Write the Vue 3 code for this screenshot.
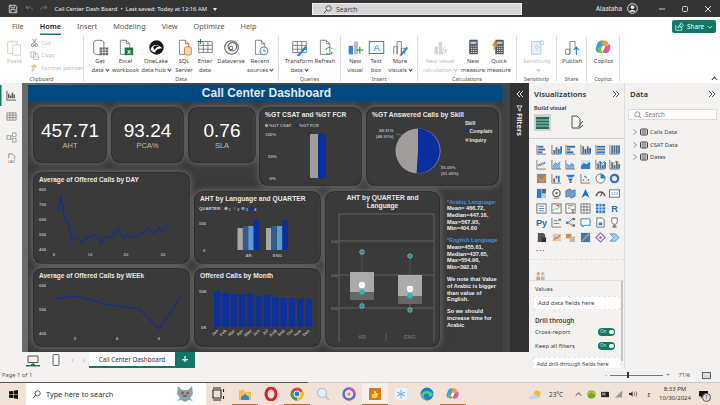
<template>
  <div class="app">
    <header class="titlebar">
      <svg class="tb-ico" viewBox="0 0 12 12"><path d="M1.5 1.5h7.5l1.5 1.5v7.5h-9z M3.5 1.5v3h4.500v-3 M3.5 10.5v-4h5v4" fill="none" stroke="#ddd" stroke-width="1"/></svg>
      <svg class="tb-ico" viewBox="0 0 12 12"><path d="M3 2v3h3 M3 5c2-3 6-2 7 2" fill="none" stroke="#777" stroke-width="1"/></svg>
      <svg class="tb-ico" viewBox="0 0 12 12"><path d="M9 2v3h-3 M9 5c-2-3-6-2-7 2" fill="none" stroke="#777" stroke-width="1"/></svg>
      <span class="doc-title">Call Center Dash Board &nbsp;•&nbsp; Last saved: Today at 12:16 AM</span>
      <span class="doc-caret"></span>
      <div class="top-search">
        <svg width="9" height="9" viewBox="0 0 12 12"><circle cx="7.5" cy="4.5" r="3.5" fill="none" stroke="#444"/><path d="M5 7l-4 4" stroke="#444" stroke-width="1.2"/></svg>
        <span>Search</span>
      </div>
      <span class="user">Alaataha</span>
      <svg class="avatar" viewBox="0 0 12 12"><circle cx="6" cy="6" r="5.3" fill="#333" stroke="#eee"/><circle cx="6" cy="4.5" r="2" fill="#eee"/><path d="M2.5 9.5c1-2.5 6-2.5 7 0z" fill="#eee"/></svg>
      <div class="win-btn"><svg width="8" height="8" viewBox="0 0 8 8"><path d="M1 4h6" stroke="#ccc"/></svg></div>
      <div class="win-btn"><svg width="8" height="8" viewBox="0 0 8 8"><rect x="1.5" y="1.5" width="5" height="5" rx="1" fill="none" stroke="#ccc"/></svg></div>
      <div class="win-btn"><svg width="8" height="8" viewBox="0 0 8 8"><path d="M1 1l6 6M7 1l-6 6" stroke="#ddd"/></svg></div>
    </header>

    <nav class="tabs">
      <span v-for="tab in tabs" :key="tab" :class="['tab', { active: tab === 'Home' }]">{{ tab }}</span>
      <button class="share">
        <svg width="9" height="9" viewBox="0 0 12 12"><path d="M1 4v7h8V8 M4 8c0-3 2-4.500 4-4.500V1l3.500 3.500L8 8V5.500C6.500 5.500 5 6.500 4 8z" fill="none" stroke="#fff" stroke-width=".9"/></svg>
        Share
        <svg width="6" height="6" viewBox="0 0 8 8"><path d="M1 2.5l3 3 3-3" fill="none" stroke="#fff"/></svg>
      </button>
    </nav>

    <section class="ribbon">
      <div class="group clipboard">
        <div class="group-body">
          <div class="rb disabled paste">
            <svg class="rb-ico" viewBox="0 0 20 20"><rect x="2" y="3" width="11" height="14" rx="1" fill="none" stroke="#edcfa9" stroke-width="1.3"/><rect x="5" y="1.5" width="5" height="3" fill="#e8e3dd"/><rect x="8" y="7" width="9" height="12" fill="#fff" stroke="#ccc"/></svg>
            <span class="rb-line">Paste</span>
          </div>
          <div class="clip-list">
            <div class="clip"><svg viewBox="0 0 10 10"><path d="M3 1l3 5M7 1L4 6" stroke="#888" fill="none"/><circle cx="3" cy="8" r="1.5" fill="none" stroke="#888"/><circle cx="7" cy="8" r="1.5" fill="none" stroke="#888"/></svg>Cut</div>
            <div class="clip"><svg viewBox="0 0 10 10"><path d="M1 1h5v6H1z M4 3h5v6.5H4z" fill="#fff" stroke="#aaa" stroke-width=".8"/></svg>Copy</div>
            <div class="clip"><svg viewBox="0 0 10 10"><path d="M1 4l4-3 3 3-4 3z" fill="#e9c88e"/><path d="M4 7l-2 2" stroke="#aaa" stroke-width="1.5"/></svg>Format painter</div>
          </div>
        </div>
        <div class="group-name">Clipboard</div>
      </div>

      <div v-for="group in ribbonGroups" :key="group.name" class="group" :style="{ width: group.width + 'px' }">
        <div class="group-body">
          <div v-for="btn in group.buttons" :key="btn.lines.join()" :class="['rb', { disabled: btn.disabled }]" :style="{ width: btn.width + 'px' }">
            <svg class="rb-ico" viewBox="0 0 20 20" v-html="ribbonIcons[btn.icon]"></svg>
            <span v-for="(line, i) in btn.lines" :key="i" class="rb-line">{{ line }}<i v-if="btn.caret && i === btn.lines.length - 1" class="caret"></i></span>
            <span v-if="btn.caretOnly" class="rb-line"><i class="caret"></i></span>
          </div>
        </div>
        <div class="group-name">{{ group.name }}</div>
      </div>
      <svg class="ribbon-collapse" width="7" height="7" viewBox="0 0 8 8"><path d="M1 5.5l3-3 3 3" fill="none" stroke="#444" stroke-width="1.2"/></svg>
    </section>

    <main class="main">
      <div class="left-col">
        <div class="work-row">
          <aside class="rail">
            <div class="rail-item selected"><svg viewBox="0 0 12 12"><path d="M1 1v10h10" fill="none" stroke="#555"/><path d="M3 9V4M5 9V6M7 9V3M9 9V5" stroke="#555" stroke-width="1.5"/></svg></div>
            <div class="rail-item"><svg viewBox="0 0 12 12"><path d="M1 2h10v8H1z M1 4.500h10 M1 7.200h10 M4.300 2v8 M7.600 2v8" fill="none" stroke="#777" stroke-width=".8"/></svg></div>
            <div class="rail-item"><svg viewBox="0 0 12 12"><path d="M7 1h4v4H7z M1 4h4v4H1z M7 7h4v4H7z M5 5l2-1 M5 7l2 1" fill="none" stroke="#888" stroke-width=".8"/></svg></div>
            <div class="rail-item"><svg viewBox="0 0 12 12"><path d="M3 1h4l2.500 2.500V7 M3 1v5" fill="none" stroke="#777" stroke-width=".8"/><text x="6" y="10.500" font-size="3.500" text-anchor="middle" fill="#666" font-family="Liberation Sans">DAX</text></svg></div>
          </aside>

          <div class="canvas-wrap">
            <div class="report">
              <h1 class="report-title">Call Center Dashboard</h1>
              <div class="report-grid">
                <div v-for="kpi in kpis" :key="kpi.label" :class="['card', 'kpi', kpi.cls]">
                  <div class="kpi-value">{{ kpi.value }}</div>
                  <div class="kpi-label">{{ kpi.label }}</div>
                </div>

                <div class="card c-csat">
                  <div class="card-title">%GT CSAT and %GT FCR</div>
                  <svg viewBox="260 121 101 64" class="chart">
                    <circle cx="266.5" cy="125.5" r="1.7" fill="#a09c9c"/><text class="ax" x="269" y="127">%GT CSAT</text>
                    <circle cx="296.5" cy="125.5" r="1.7" fill="#0b2f9f"/><text class="ax" x="299" y="127">%GT FCR</text>
                    <text class="ax" x="265" y="136">100%</text><text class="ax" x="268" y="158">50%</text><text class="ax" x="269.5" y="180">0%</text>
                    <rect x="310" y="134" width="8" height="44" fill="#a09c9c"/><rect x="318" y="134" width="8" height="44" fill="#0b2f9f"/>
                  </svg>
                </div>

                <div class="card c-pie">
                  <div class="card-title">%GT Answered Calls by Skill</div>
                  <svg viewBox="367 121 131 64" class="chart">
                    <circle cx="418" cy="151" r="22.5" fill="#a09c9c"/>
                    <path d="M418 151L418 128.5A22.5 22.5 0 1 1 416.6 173.5Z" fill="#0b2f9f"/>
                    <path d="M396 134l6 1 M439 165l6 3" stroke="#999" stroke-width=".5" fill="none"/>
                    <text class="ax" x="379" y="132">48.91%</text><text class="ax" x="376" y="137.5">(48.91%)</text>
                    <text class="ax" x="441" y="169">51.09%</text><text class="ax" x="441" y="174.5">(51.09%)</text>
                    <text class="lg-b" x="465" y="125">Skill</text>
                    <circle cx="467" cy="130.5" r="1.8" fill="#0b2f9f"/><text class="lg-b" x="469.5" y="132.5">Complain</text>
                    <circle cx="467" cy="140" r="1.8" fill="#a09c9c"/><text class="lg-b" x="469.5" y="142">Inquiry</text>
                  </svg>
                </div>

                <div class="card c-day">
                  <div class="card-title narrow">Average of Offered Calls by DAY</div>
                  <svg viewBox="34 186 155 77" class="chart">
                    <text v-for="t in dayY" :key="t.v" class="ax" x="39" :y="t.y">{{ t.v }}</text>
                    <text v-for="t in dayX" :key="t.v" class="ax" :x="t.x" y="256" text-anchor="middle">{{ t.v }}</text>
                    <polyline :points="dayLine" class="line"/>
                  </svg>
                </div>

                <div class="card c-week">
                  <div class="card-title narrow">Average of Offered Calls by WEEk</div>
                  <svg viewBox="34 282 155 64" class="chart">
                    <text class="ax" x="39" y="287">600</text><text class="ax" x="39" y="311">500</text><text class="ax" x="39" y="335">400</text>
                    <text class="ax" x="75" y="340" text-anchor="middle">2</text><text class="ax" x="117" y="340" text-anchor="middle">4</text><text class="ax" x="159" y="340" text-anchor="middle">6</text>
                    <polyline points="54,298.5 76,296 105,304 118,306 139,308.5 159,329 181,297" class="line"/>
                  </svg>
                </div>

                <div class="card c-lang">
                  <div class="card-title">AHT by Language and QUARTER</div>
                  <svg viewBox="195 205 125 58" class="chart">
                    <text class="lg-b small" x="199" y="210">QUARTER</text>
                    <g v-for="(q, i) in quarters" :key="i">
                      <circle :cx="226 + i * 8.5" cy="208.5" r="1.7" :fill="q"/>
                      <text class="ax" :x="228.5 + i * 8.5" y="210.5">{{ i + 1 }}</text>
                    </g>
                    <text class="ax" x="199" y="225">500</text><text class="ax" x="203" y="252">0</text>
                    <rect v-for="b in langBars" :key="b.x" :x="b.x" :y="b.y" width="5.3" :height="250 - b.y" :fill="b.c"/>
                    <text class="ax" x="248.5" y="257" text-anchor="middle">AR</text><text class="ax" x="277.5" y="257" text-anchor="middle">ENG</text>
                  </svg>
                </div>

                <div class="card c-month">
                  <div class="card-title">Offered Calls by Month</div>
                  <svg viewBox="195 282 125 64" class="chart">
                    <text class="ax" x="199" y="293">50K</text><text class="ax" x="201" y="329">0K</text>
                    <rect v-for="b in monthBars" :key="b.x" :x="b.x" :y="b.y" width="6.6" :height="327 - b.y" fill="#0b2f9f"/>
                    <text v-for="b in monthBars" :key="b.m" class="ax" text-anchor="end" :transform="`translate(${b.x + 4.5} 331) rotate(-45)`">{{ b.m }}</text>
                  </svg>
                </div>

                <div class="card c-box">
                  <div class="card-title box-title">AHT by QUARTER and<br>Language</div>
                  <svg viewBox="326 213 113 133" class="chart">
                    <path d="M339 342V214H434V342 M339 241H434 M339 275H434 M339 308H434 M386 333V341" fill="none" stroke="#666" stroke-width=".9"/>
                    <text class="ax dim" x="331" y="242.5">600</text><text class="ax dim" x="331" y="276.5">500</text><text class="ax dim" x="331" y="309.5">400</text>
                    <g v-for="box in boxes" :key="box.x">
                      <path :d="`M${box.x} ${box.top}V${box.bottom}`" stroke="#666" stroke-width=".6"/>
                      <rect :x="box.x - 12" :y="box.q3" width="24" :height="box.q1 - box.q3" fill="#ababab"/>
                      <rect :x="box.x - 12" :y="box.q1" width="24" height="8" fill="#666"/>
                      <circle :cx="box.x" :cy="box.top" r="2.3" fill="#1f8f93" stroke="#cdd" stroke-width=".5"/>
                      <circle :cx="box.x" :cy="box.bottom" r="2.3" fill="#1f8f93" stroke="#cdd" stroke-width=".5"/>
                      <circle :cx="box.x" :cy="box.q1" r="2.8" fill="#2db2b8"/>
                      <circle :cx="box.x" :cy="box.q1 - 7" r="3.2" fill="#fff"/>
                      <text class="ax dim big" :x="box.x" y="339" text-anchor="middle">{{ box.label }}</text>
                    </g>
                  </svg>
                </div>

                <div class="notes">
                  <p><b class="note-head">*Arabic Language:</b><br>Mean= 466.72,<br>Median=447.16,<br>Max=567.95,<br>Min=404.60</p>
                  <p><b class="note-head">*English Language</b><br>Mean=455.61,<br>Median=437.65,<br>Max=554.96,<br>Min=392.16</p>
                  <p>We note that Value<br>of Arabic is bigger<br>than value of<br>English.</p>
                  <p>So we should<br>increase time for<br>Arabic</p>
                </div>
              </div>
            </div>
          </div>

          <aside class="filters">
            <svg width="8" height="8" viewBox="0 0 8 8"><path d="M4 1L1 4l3 3M7 1L4 4l3 3" fill="none" stroke="#eee"/></svg>
            <svg class="filter-ico" width="7" height="7" viewBox="0 0 8 8"><path d="M1 1h6L4.8 4v3L3.2 6V4z" fill="none" stroke="#eee"/></svg>
            <span class="filters-label">Filters</span>
          </aside>
        </div>

        <div class="pagebar">
          <div class="device active-device">
            <svg width="12" height="10" viewBox="0 0 12 10"><path d="M1 1h10v6.5H1z M4 9.5h4 M6 7.5v2" fill="none" stroke="#555"/></svg>
          </div>
          <div class="device">
            <svg width="8" height="12" viewBox="0 0 8 12"><rect x="1" y=".5" width="6" height="11" rx="1" fill="none" stroke="#666"/></svg>
          </div>
          <span class="pg-arrow">‹</span><span class="pg-arrow">›</span>
          <div class="page-tab">Call Center Dashboard</div>
          <div class="page-add">+</div>
        </div>
      </div>

      <aside class="viz">
        <div class="pane-head"><strong>Visualizations</strong>
          <svg width="8" height="8" viewBox="0 0 8 8"><path d="M1 1l3 3-3 3M4 1l3 3-3 3" fill="none" stroke="#555"/></svg>
        </div>
        <div class="build">Build visual</div>
        <div class="build-tabs">
          <div class="build-sel">
            <svg width="13" height="12" viewBox="0 0 13 12"><rect width="13" height="12" fill="#1f6f5e"/><path d="M0 3h13M0 6h13M0 9h13" stroke="#ddd" stroke-width=".8"/></svg>
          </div>
          <svg class="build-fmt" width="14" height="15" viewBox="0 0 14 15"><path d="M2 1h5l3 3v9H2z M8 12l5-6M10 13l3-3" fill="none" stroke="#555"/></svg>
        </div>
        <div class="viz-grid">
          <svg v-for="(icon, i) in vizIcons" :key="i" width="11" height="11" viewBox="0 0 12 12" v-html="icon"></svg>
        </div>
        <div class="dots">···</div>
        <div class="extra">
          <svg width="11" height="11" viewBox="0 0 12 12"><circle cx="3.5" cy="3" r="1.8" fill="#e8a06a"/><circle cx="8.5" cy="3" r="1.8" fill="#bbb"/><rect x="1.5" y="6" width="4" height="4" fill="#e8a06a"/><rect x="6.5" y="6" width="4" height="4" fill="#bbb"/></svg>
        </div>
        <div class="wells">
          <div class="well-label">Values</div>
          <div class="well">Add data fields here</div>
          <div class="well-head">Drill through</div>
          <div class="toggle-row">Cross-report<span class="toggle">On<i></i></span></div>
          <div class="toggle-row">Keep all filters<span class="toggle">On<i></i></span></div>
          <div class="well last">Add drill-through fields here</div>
          <div class="scroll"></div>
        </div>
      </aside>

      <aside class="data">
        <div class="pane-head"><strong>Data</strong>
          <svg width="8" height="8" viewBox="0 0 8 8"><path d="M1 1l3 3-3 3M4 1l3 3-3 3" fill="none" stroke="#555"/></svg>
        </div>
        <div class="data-search">
          <svg width="8" height="8" viewBox="0 0 12 12"><circle cx="5" cy="5" r="3.8" fill="none" stroke="#666"/><path d="M8 8l3 3" stroke="#666"/></svg>
          Search
        </div>
        <div v-for="table in tables" :key="table" class="data-row">
          <svg width="6" height="6" viewBox="0 0 6 6"><path d="M1.5 .5l3 2.500-3 2.500" fill="none" stroke="#777" stroke-width=".8"/></svg>
          <svg width="8" height="8" viewBox="0 0 8 8"><rect x=".5" y="1" width="7" height="6" rx="1" fill="#fff" stroke="#444"/><path d="M.5 3h7M.5 5h7M3 1v6M5 1v6" stroke="#444" stroke-width=".6"/></svg>
          {{ table }}
        </div>
      </aside>
    </main>

    <div class="status">
      <span>Page 1 of 1</span>
      <div class="zoom">
        <span>-</span>
        <div class="slider"><i></i></div>
        <span>+</span>
        <span class="zoom-pct">71%</span>
        <svg width="9" height="7" viewBox="0 0 9 7"><rect x=".5" y=".5" width="8" height="6" fill="#ddd" stroke="#666"/></svg>
      </div>
    </div>

    <footer class="taskbar">
      <div class="start"><svg width="9" height="9" viewBox="0 0 10 10"><path d="M0 1.5L4.500 1v3.800H0z M5.200 .9L10 0v4.800H5.200z M0 5.400h4.500V9L0 8.500z M5.200 5.400H10V10L5.200 9.200z" fill="#111"/></svg></div>
      <div class="task-search">
        <svg width="9" height="9" viewBox="0 0 12 12"><circle cx="7.5" cy="4.5" r="3.5" fill="none" stroke="#333"/><path d="M5 7l-4 4" stroke="#333" stroke-width="1.2"/></svg>
        <span>Type here to search</span>
        <svg class="mascot" width="20" height="18" viewBox="0 0 20 18"><path d="M3 1l4 4h6l4-4 1 8-3 4 3 3-4-1-4 2-4-2-4 1 3-3-3-4z" fill="#84a6a6"/><circle cx="7.5" cy="8" r="1.5" fill="#c44"/><circle cx="12.5" cy="8" r="1.5" fill="#c44"/><path d="M8 11h4" stroke="#234" stroke-width=".8"/></svg>
      </div>
      <div v-for="app in taskApps" :key="app.name" :class="['task-app', { running: app.running, focused: app.focused }]">
        <svg width="14" height="14" viewBox="0 0 14 14" v-html="app.svg"></svg>
      </div>
      <div class="tray">
        <svg width="14" height="13" viewBox="0 0 14 13"><circle cx="9" cy="6" r="3.5" fill="#f4b93c"/><path d="M1 11c0-2.500 2-3 3-3 .5-2 4-2.500 5 0 2.500 0 3 3 1 3z" fill="#bcd6ea"/></svg>
        <span class="t-temp">23°C</span>
        <svg class="t-item" width="7" height="6" viewBox="0 0 8 6"><path d="M1 5l3-3.500L7 5" fill="none" stroke="#333"/></svg>
        <svg class="t-item" width="9" height="9" viewBox="0 0 10 10"><circle cx="5" cy="5" r="4.5" fill="#6aa82e"/><path d="M2 5a3 3 0 0 1 6 0" fill="none" stroke="#f0c020" stroke-width="1.5"/></svg>
        <svg class="t-item" width="9" height="7" viewBox="0 0 10 8"><rect y="1" width="9" height="6" fill="#222"/><rect x="1" y="2" width="4" height="3" fill="#888"/></svg>
        <svg class="t-item" width="9" height="8" viewBox="0 0 10 8"><path d="M0 8L8 0v8z" fill="#999"/></svg>
        <svg class="t-item" width="9" height="8" viewBox="0 0 10 8"><path d="M0 3h2l2-2v6L2 5H0z" fill="#333"/><path d="M5.500 2c1 1 1 3 0 4M7.500 1c1.500 1.500 1.500 4.500 0 6" fill="none" stroke="#333" stroke-width=".7"/></svg>
        <span class="t-lang">ε</span>
        <div class="clock"><span>8:33 PM</span><span>10/30/2024</span></div>
        <div class="notify">
          <svg width="9" height="8" viewBox="0 0 10 9"><path d="M0 0h10v6H4L2 8.500V6H0z" fill="#111"/></svg>
          <span>1</span>
        </div>
      </div>
    </footer>
  </div>
</template>

<script setup>
const tabs = ['File', 'Home', 'Insert', 'Modeling', 'View', 'Optimize', 'Help']
const tables = ['Calls Data', 'CSAT Data', 'Dates']

const kpis = [
  { value: '457.71', label: 'AHT', cls: 'k1' },
  { value: '93.24', label: 'PCA%', cls: 'k2' },
  { value: '0.76', label: 'SLA', cls: 'k3' }
]

const ribbonGroups = [
  {
    name: 'Data', width: 195,
    buttons: [
      { icon: 'get', lines: ['Get', 'data'], width: 24, caret: true },
      { icon: 'excel', lines: ['Excel', 'workbook'], width: 27 },
      { icon: 'onelake', lines: ['OneLake', 'data hub'], width: 34, caret: true },
      { icon: 'sql', lines: ['SQL', 'Server'], width: 22 },
      { icon: 'enter', lines: ['Enter', 'data'], width: 20 },
      { icon: 'dataverse', lines: ['Dataverse'], width: 32 },
      { icon: 'recent', lines: ['Recent', 'sources'], width: 26, caret: true }
    ]
  },
  {
    name: 'Queries', width: 62,
    buttons: [
      { icon: 'transform', lines: ['Transform', 'data'], width: 32, caret: true },
      { icon: 'refresh', lines: ['Refresh'], width: 20 }
    ]
  },
  {
    name: 'Insert', width: 77,
    buttons: [
      { icon: 'newvisual', lines: ['New', 'visual'], width: 20 },
      { icon: 'textbox', lines: ['Text', 'box'], width: 22 },
      { icon: 'more', lines: ['More', 'visuals'], width: 26, caret: true }
    ]
  },
  {
    name: 'Calculations', width: 99,
    buttons: [
      { icon: 'vcalc', lines: ['New visual', 'calculation'], width: 36, caret: true, disabled: true },
      { icon: 'measure', lines: ['New', 'measure'], width: 30 },
      { icon: 'quick', lines: ['Quick', 'measure'], width: 22 }
    ]
  },
  {
    name: 'Sensitivity', width: 40,
    buttons: [{ icon: 'sens', lines: ['Sensitivity'], width: 32, disabled: true, caretOnly: true }]
  },
  {
    name: 'Share', width: 30,
    buttons: [{ icon: 'publish', lines: ['Publish'], width: 22 }]
  },
  {
    name: 'Copilot', width: 33,
    buttons: [{ icon: 'copilot', lines: ['Copilot'], width: 25 }]
  }
]

const copilotMark = '<path d="M3 5c1-3 4-4 7-3l3 1-4 7-4 6c-3 0-5-3-4-6z" fill="#3aa0e8"/><path d="M3 11l5-3 1 8c-3 2-6 0-6-5z" fill="#7bc043"/><path d="M9 2c3-1 6 0 7 3l-3 4-5-2z" fill="#f0a030"/><path d="M17 6c2 3 1 8-2 10-2 1-5 1-6-1l3-6z" fill="#e05aa0"/><path d="M9 8l3 1-3 6-2-3z" fill="#fff"/>'
const calc = '<rect x="5" y="1" width="10" height="17" rx="1" fill="#555"/><rect x="6.5" y="3" width="7" height="3" fill="#9ec6e8"/><path d="M7 8.5h1.500M9.500 8.5H11M12 8.5h1.500M7 11h1.500M9.500 11H11M12 11h1.500M7 13.5h1.500M9.500 13.5H11M12 13.5h1.500M7 16h1.500M9.500 16H11M12 16h1.500" stroke="#fff"/>'
const doc = '<path d="M4 1.5h7l4 4V18H4z M11 1.5v4h4" fill="#fff" stroke="#666" stroke-width=".9"/>'
const table = '<path d="M2 3h16v13H2z M2 7.5h16 M2 12h16 M7.500 3v13 M12.800 3v13" fill="#fff" stroke="#666" stroke-width=".9"/>'

const ribbonIcons = {
  get: '<ellipse cx="8" cy="4" rx="6" ry="2.5" fill="#fff" stroke="#666"/><path d="M2 4v12c0 1.500 3 2.500 6 2.500s6-1 6-2.500V4" fill="#fff" stroke="#666"/><rect x="9" y="10" width="10" height="9" fill="#666"/><path d="M9 13h10M9 16h10M12.300 10v9M15.600 10v9" stroke="#fff" stroke-width=".7"/>',
  excel: doc + '<rect x="9" y="10" width="10" height="9" fill="#107c41"/><text x="14" y="17.5" font-size="7" fill="#fff" text-anchor="middle" font-weight="700" font-family="Liberation Sans">X</text>',
  onelake: '<circle cx="10" cy="10" r="8.5" fill="#1a1a1a"/><path d="M3 12c3-7 9-6 14-1-4 0-7 1-9 5-2 0-4-2-5-4z" fill="#fff"/><path d="M6 10c2-3 5-3 7-1-2 0-4 1-5 4z" fill="#1a1a1a"/>',
  sql: doc + '<ellipse cx="14" cy="10.5" rx="4" ry="1.5" fill="#f6d9b8" stroke="#d67a1f"/><path d="M10 10.5v7c0 1 2 1.500 4 1.500s4-.5 4-1.500v-7" fill="#f6d9b8" stroke="#d67a1f"/>',
  enter: table + '<path d="M4 0v6M1 3h6" stroke="#107c41" stroke-width="1.2"/>',
  dataverse: '<circle cx="10" cy="10" r="8" fill="none" stroke="#666" stroke-width="1.3"/><circle cx="11" cy="9" r="5" fill="none" stroke="#666" stroke-width="1.3"/><circle cx="9.5" cy="10.5" r="2" fill="none" stroke="#666" stroke-width="1.2"/>',
  recent: doc + '<circle cx="14" cy="14" r="4.7" fill="#fff" stroke="#2b7cd3" stroke-width="1.1"/><path d="M14 11.5V14h2.200" fill="none" stroke="#2b7cd3"/>',
  transform: table + '<path d="M8 18l9-10 2 2-9 10-3 0z" fill="#2b88d8"/>',
  refresh: doc + '<path d="M10.500 13a4 4 0 0 1 7-1.500 M18 15a4 4 0 0 1-7 1.500" fill="none" stroke="#4aa564" stroke-width="1.3"/>',
  newvisual: '<rect x="2" y="8" width="5" height="10" fill="#2b88d8"/><rect x="8" y="3" width="5" height="15" fill="#bbb"/><path d="M15 9v8M11 13h8" stroke="#2f9e58" stroke-width="1.5"/>',
  textbox: '<rect x="1.5" y="3" width="17" height="14" fill="#fff" stroke="#2b7cd3" stroke-width="1.2"/><text x="10" y="14.5" font-size="11" text-anchor="middle" fill="#2b7cd3" font-family="Liberation Sans">A</text>',
  more: '<path d="M2 18V9h4v9 M6 18V3h5v15 M11 18v-7h4v7" fill="#fff" stroke="#666" stroke-width=".9"/><path d="M9 19l8-10 2 2-8 9z" fill="#2b88d8"/>',
  vcalc: '<rect x="3" y="9" width="4" height="9" fill="#d8d8d8"/><rect x="8" y="3" width="4" height="15" fill="#d8d8d8"/><text x="15" y="16" font-size="9" font-style="italic" text-anchor="middle" fill="#bbb" font-family="Liberation Serif">fx</text>',
  measure: calc,
  quick: calc + '<path d="M6 0L1 8h3l-2 7 6-9H5z" fill="#e8862a"/>',
  sens: '<path d="M3 3h11v15H3z" fill="#e4f0fa" stroke="#a9cdec"/><path d="M6 8l5 5M8 6l5 5" stroke="#a9cdec"/><circle cx="15" cy="4.5" r="2.5" fill="none" stroke="#a9cdec"/>',
  publish: '<path d="M2 18v-6h5v6z M7 18V3h6v8" fill="#fff" stroke="#666" stroke-width=".9"/><path d="M14.500 19v-9M11.500 13l3-3.500 3 3.500" fill="none" stroke="#2b7cd3" stroke-width="1.3"/>',
  copilot: copilotMark
}

const dayLine = '58,212 61,196 65,220 67,222 69,225 72,242 75,238 78,238 83,243 87,237 90,238 94,235 98,238 101,243 105,237 112,237 116,230 119,230 123,238 127,235 134,238 142,233 148,228 152,233 156,232 159,228 163,232 167,224'
const dayY = [{ v: 800, y: 191 }, { v: 700, y: 206 }, { v: 600, y: 221 }, { v: 500, y: 236 }, { v: 400, y: 251 }]
const dayX = [{ v: 0, x: 54 }, { v: 10, x: 90 }, { v: 20, x: 126 }, { v: 30, x: 163 }]

const quarters = ['#a8a8a8', '#2f5f8f', '#5b9bd5', '#0b2f9f']
const langBars = [
  [237.5, 228, 0], [243, 226, 1], [248.3, 226, 2], [253.7, 220, 3],
  [266, 228, 0], [271.5, 226, 1], [277, 226, 2], [282.5, 220, 3]
].map(([x, y, q]) => ({ x, y, c: quarters[q] }))

const months = ['Jan', 'Feb', 'Mar', 'Apr', 'May', 'Jun', 'Jul', 'Aug', 'Sep', 'Oct', 'Nov', 'Dec']
const monthTops = [291, 293, 294, 294, 294, 296, 295, 297, 298, 298, 299, 299]
const monthBars = months.map((m, i) => ({ m, x: 214 + i * 8.3, y: monthTops[i] }))

const boxes = [
  { x: 362, label: 'AR', top: 252, bottom: 306, q3: 272, q1: 292 },
  { x: 410, label: 'ENG', top: 256, bottom: 310, q3: 275, q1: 296 }
]

// Visualization pane icons, small enough that only the rough shape has to read
const G = '#6b6a68'
const B = '#2b7cd3'
const O = '#dd8a3c'
const rect = (x, y, w, h, c = G) => `<rect x="${x}" y="${y}" width="${w}" height="${h}" fill="${c}"/>`
const line = (d, c = G, w = 0.9) => `<path d="${d}" fill="none" stroke="${c}" stroke-width="${w}"/>`
const axis = line('M1 1V11H11')
const hb = (a, c = B) => axis + a.map((w, i) => rect(2, 2 + i * 3, w, 2, i % 2 ? G : c)).join('')
const vb = (a, c = B) => axis + a.map((h, i) => rect(2.5 + i * 2.5, 10.5 - h, 2, h, i % 2 ? c : G)).join('')
const area = (d, c = B) => axis + `<path d="${d}V11H2z" fill="${c}" opacity=".55"/>` + line(d, c)
const vizIcons = [
  hb([6, 8, 5]), vb([4, 7, 5, 8]), hb([9, 4, 7], '#1d6fb8'), vb([8, 5, 8, 6], '#1d6fb8'), hb([9, 9, 9]), vb([9, 9, 9, 9]),
  axis + line('M2 8l3-3 2 2 3-4', B) + line('M2 6l3 1 2-3 3 1'),
  area('M2 8l3-4 2 2 3-3'), area('M2 5l3 3 2-3 3 2'), rect(1, 1, 10, 10, '#cfe2f3') + `<path d="M1 8l3-4 3 2 4-3v8H1z" fill="${B}"/>`, vb([5, 8, 4, 7]) + line('M2 6l3-3 3 2 3-3', B), vb([7, 4, 8, 5]) + line('M2 3l3 2 3-3 3 2', O),
  rect(1, 1, 10, 10, '#8a8a8a') + `<path d="M1 3l5 5 5-6v5l-5 4-5-5z" fill="${O}"/>`, axis + rect(2.5, 6, 2, 4) + rect(5, 3, 2, 3) + rect(7.5, 3, 2, 7, B),
  `<path d="M1 2h10L8.5 5h-5z" fill="${B}"/><path d="M3.5 6h5l-1 2.500h-3zM4.800 9h2.400v2H4.800z" fill="${G}"/>`, axis + rect(3, 7, 1.5, 1.5, B) + rect(6, 4, 1.5, 1.5, B) + rect(8.5, 7, 1.5, 1.5) + rect(4.5, 3, 1.5, 1.5),
  `<circle cx="6" cy="6" r="5" fill="#fff" stroke="${G}"/><path d="M6 6V1a5 5 0 0 1 5 5z" fill="${B}"/>`, `<circle cx="6" cy="6" r="4" fill="none" stroke="${B}" stroke-width="2.5"/><path d="M6 2a4 4 0 0 1 4 4" fill="none" stroke="${G}" stroke-width="2.5"/>`,
  rect(1, 1, 5, 10, B) + rect(6.5, 1, 4.5, 5, G) + rect(6.5, 6.5, 4.5, 4.5, '#a9cdec'), `<circle cx="6" cy="5.5" r="4" fill="#fff" stroke="${G}" stroke-width="1.4"/><circle cx="6" cy="5.5" r="1.5" fill="#4a9a50"/>` + line('M3 11h6'), `<path d="M1 3l4-2 3 2 3-1v7l-4 2-3-2-3 1z" fill="${B}" opacity=".7"/>` + line('M1 3l4-2 3 2 3-1v7l-4 2-3-2-3 1z'), `<path d="M6 1l4.500 10-4.500-3-4.500 3z" fill="#1d6fb8"/>`,
  line('M1.500 9a4.500 4.500 0 0 1 9 0', G, 2) + line('M6 9l2-4', '#222', 1), `<rect x=".5" y="2" width="11" height="8" fill="#fff" stroke="${G}"/><text x="6" y="8" font-size="4.5" text-anchor="middle" fill="${B}" font-family="Liberation Sans">123</text>`,
  `<rect x="1" y="1" width="10" height="10" fill="#fff" stroke="${G}"/>` + line('M3 3.500h6M3 6h6M3 8.500h6', B), `<rect x="1" y="1" width="10" height="10" fill="#fff" stroke="${G}"/>` + line('M2 8l3-2 2 1 3-4', '#4a9a50') + rect(6, 2, 3, 1.5, '#d44'), `<rect x="1" y="1" width="10" height="10" fill="#fff" stroke="${G}"/>` + line('M3 3h6M3 5.500h3') + line('M7 7h3l-1.200 1.500V11L8 10V8.500z', G), `<rect x="1" y="1" width="10" height="10" fill="#fff"/>` + line('M1 1h10v10H1z M1 4.300h10 M1 7.600h10 M4.300 1v10 M7.600 1v10'),
  rect(1, 1, 10, 10, B) + line('M1 4.300h10 M1 7.600h10 M4.300 1v10 M7.600 1v10', '#fff'), `<text x="6" y="10" font-size="10" font-weight="700" text-anchor="middle" fill="#1d6fb8" font-family="Liberation Sans">R</text>`,
  `<text x="6" y="10" font-size="10" font-weight="700" text-anchor="middle" fill="#1d6fb8" font-family="Liberation Sans">Py</text>`, axis + line('M3 4h4M3 7h6', G) + rect(8, 2, 3, 2, '#4a9a50'), rect(1, 5, 3, 2.5, B) + rect(8, 1, 3, 2.5, G) + rect(8, 8, 3, 2.5, G) + line('M4 6l4-4M4 6.500l4 3'), `<path d="M1 2h10v7H5l-2 2V9H1z" fill="#fff" stroke="${B}"/>`,
  `<path d="M2 1h6l2 2v8H2z" fill="#fff" stroke="${G}"/>` + rect(4, 6, 4, 3, B), `<path d="M3 1h6v4a3 3 0 0 1-6 0z M5 9h2v1.500H5z M3.500 11h5" fill="#fff" stroke="${G}"/>`,
  `<path d="M2 1h6l2 2v8H2z" fill="#555"/>` + rect(6, 6, 5, 5, '#333'), rect(2, 2, 9, 8, '#f1c68f') + line('M3 9l2-3 2 1 3-4', B), rect(1, 2, 6, 5, O) + rect(5, 5, 6, 6, '#bbb'), rect(1, 1, 10, 10, B) + line('M2 10L10 2', O, 2), `<path d="M6 1l5 5-5 5-5-5z" fill="none" stroke="#9a5fc0" stroke-width="1.2"/><circle cx="6" cy="6" r="1.5" fill="#9a5fc0"/>`, `<path d="M1 2h6l4 4-4 4H1l4-4z" fill="#9ccbf0" stroke="${B}" stroke-width=".7"/>`
]

const taskApps = [
  { name: 'view', svg: '<path d="M1 3h8v8H1z M1 1h8 M1 13h8 M11.500 2v3 M11.500 9v3" fill="none" stroke="#222" stroke-width="1.1"/>' },
  { name: 'explorer', running: true, svg: '<path d="M1 3h5l1 2h6v8H1z" fill="#f2c14e"/><path d="M3 10l4-3 4 3v3H3z" fill="#2b88d8"/>' },
  { name: 'opera', svg: '<ellipse cx="7" cy="7" rx="5" ry="6" fill="none" stroke="#e0202c" stroke-width="3"/>' },
  { name: 'chrome', running: true, svg: '<circle cx="7" cy="7" r="6.5" fill="#e0443a"/><path d="M7 7L1.300 4A6.500 6.500 0 0 0 7 13.500z" fill="#3aa757"/><path d="M7 7v6.500A6.500 6.500 0 0 0 12.700 4z" fill="#f5c518"/><circle cx="7" cy="7" r="3" fill="#2b7cd3" stroke="#fff"/>' },
  { name: 'search', svg: '<circle cx="6" cy="6" r="4.5" fill="#e4eef6" stroke="#a8c4da" stroke-width="1.2"/><path d="M9 9l4 4" stroke="#a8c4da" stroke-width="1.5"/>' },
  { name: 'photos', svg: '<circle cx="7" cy="7" r="5.5" fill="none" stroke="#5b6fd6" stroke-width="2.5"/><path d="M7 1.500a5.500 5.500 0 0 1 5.500 5.500" fill="none" stroke="#c05ac0" stroke-width="2.5"/><circle cx="7" cy="7" r="1.5" fill="#e8862a"/>' },
  { name: 'powerbi', focused: true, running: true, svg: '<rect x="1" y="1" width="12" height="12" fill="#d97a1c"/><path d="M4 11V7h2V4h2v2h2c0 3-1 5-2 5z" fill="#f6d348"/>' },
  { name: 'snow', svg: '<rect x="1" y="1" width="12" height="12" rx="2" fill="#eef4f8"/><path d="M7 2.500v9M3 5l8 4M11 5l-8 4" stroke="#7fb2dc" stroke-width="1.1"/>' },
  { name: 'edge', svg: '<circle cx="7" cy="7" r="6.5" fill="#1f7fc4"/><path d="M1 8c1-4 8-6 12-1 0 2-2 2.500-4 2.500 1-3-3-4-5-1.500-1 2 1 5 5 5-4 1-8-2-8-5z" fill="#48d08e"/>' },
  { name: 'copilot', running: true, svg: '<g transform="scale(.7)">' + copilotMark + '</g>' }
]
</script>

<style scoped>
.app {
  width: 720px;
  height: 405px;
  display: flex;
  flex-direction: column;
  overflow: hidden;
  font-family: "Noto Sans", "Open Sans", sans-serif;
  color: #333;
  background: #f3f2f1;
}

/* title bar */
.titlebar {
  height: 17px;
  background: #353535;
  color: #eee;
  display: flex;
  align-items: center;
  padding-left: 8px;
  flex-shrink: 0;
  position: relative;
}

.tb-ico {
  width: 10px;
  height: 10px;
  margin-right: 5.5px;
}

.doc-title {
  font-size: 5.8px;
  white-space: nowrap;
  width: 158px;
}

.doc-caret {
  width: 0;
  height: 0;
  border: 2.5px solid transparent;
  border-top: 3px solid #eee;
  margin-top: 3px;
}

.top-search {
  position: absolute;
  left: 312px;
  top: 3px;
  width: 210px;
  height: 12px;
  background: #d6d6d4;
  border: 1px solid #eee;
  box-sizing: border-box;
  display: flex;
  align-items: center;
  gap: 4px;
  padding-left: 10px;
  font-size: 6.8px;
  color: #444;
}

.user {
  margin-left: auto;
  font-size: 6.3px;
  margin-right: 5px;
}

.avatar {
  width: 11px;
  height: 11px;
  margin-right: 12px;
}

.win-btn {
  width: 23px;
  display: flex;
  justify-content: center;
}

.win-btn:last-child {
  margin-right: 1px;
}

/* tab strip */
.tabs {
  height: 19px;
  flex-shrink: 0;
  background: #fff;
  display: flex;
  align-items: center;
  padding-left: 12px;
  gap: 16px;
  font-size: 7.3px;
  color: #555;
}

.tab {
  height: 17px;
  line-height: 17px;
  margin-top: -1px;
}

.tab.active {
  color: #222;
  font-weight: 600;
  box-shadow: inset 0 -1.5px 0 #117865;
}

.share {
  margin-left: auto;
  margin-right: 4px;
  height: 13px;
  width: 44px;
  border: none;
  border-radius: 2px;
  background: #117865;
  color: #fff;
  font: 6.3px "Noto Sans", sans-serif;
  display: flex;
  align-items: center;
  justify-content: center;
  gap: 3px;
  padding: 0;
}

/* ribbon */
.ribbon {
  height: 47px;
  flex-shrink: 0;
  background: #fff;
  display: flex;
  position: relative;
}

.group {
  height: 46px;
  display: flex;
  flex-direction: column;
  border-right: 1px solid #dedede;
  box-sizing: border-box;
}

.clipboard {
  width: 84px;
}

.group-body {
  display: flex;
  flex: 1;
  padding: 3px 0 0 4px;
}

.group-name {
  font-size: 5.3px;
  color: #555;
  text-align: center;
  line-height: 5px;
  height: 5px;
}

.rb {
  display: flex;
  flex-direction: column;
  align-items: center;
  font-size: 5.8px;
  color: #444;
  flex-shrink: 0;
}

.rb-ico {
  width: 17px;
  height: 17px;
  margin-bottom: 1px;
  flex-shrink: 0;
}

.rb-line {
  line-height: 8.5px;
  white-space: nowrap;
}

.rb.disabled {
  color: #bdbdbd;
}

.caret {
  display: inline-block;
  width: 2px;
  height: 2px;
  border-right: .8px solid currentColor;
  border-bottom: .8px solid currentColor;
  transform: rotate(45deg);
  margin: 0 0 1px 2px;
}

.paste {
  width: 21px;
}

.clip-list {
  margin-left: 5px;
  margin-top: -1px;
  display: flex;
  flex-direction: column;
  gap: 3.5px;
}

.clip {
  display: flex;
  align-items: center;
  gap: 2px;
  font-size: 6px;
  color: #bdbdbd;
  height: 9px;
  white-space: nowrap;
}

.clip svg {
  width: 9px;
  height: 9px;
}

.ribbon-collapse {
  position: absolute;
  right: 2px;
  bottom: 1px;
}

/* main area: the side panes run down past the page tabs */
.main {
  height: 285px;
  flex-shrink: 0;
  display: flex;
}

.left-col {
  width: 529px;
  flex-shrink: 0;
  display: flex;
  flex-direction: column;
}

.work-row {
  height: 269px;
  display: flex;
}

.rail {
  width: 22px;
  flex-shrink: 0;
  padding-top: 2px;
  box-sizing: border-box;
  background: #f3f2f1;
}

.rail-item {
  height: 21px;
  display: flex;
  align-items: center;
  justify-content: center;
}

.rail-item svg {
  width: 11px;
  height: 11px;
}

.rail-item.selected {
  box-shadow: inset 1.5px 0 0 #117865;
}

.canvas-wrap {
  width: 488px;
  flex-shrink: 0;
  padding: 2px 7px 0 6px;
  box-sizing: border-box;
  background: linear-gradient(90deg, #6c6c6c, #444 30%, #444);
}

.report {
  height: 267px;
  background: #3b3b3b;
  overflow: hidden;
}

.report-title {
  margin: 0;
  height: 17px;
  background: #004a80;
  color: #e6e6e6;
  font: 700 12px/17px "Liberation Sans", Arial, sans-serif;
  text-align: center;
  padding-left: 2px;
}

.report-grid {
  display: grid;
  grid-template-columns: 72px 6px 71px 6px 6px 60px 5px 60px 6px 35px 6px 72px 7px 52px;
  grid-template-rows: 54px 11px 12px 7px 71px 6px 77px;
  padding: 6px 0 0 6px;
}

.card {
  background: #3a3a3a;
  border-radius: 8px;
  box-shadow: 0 0 0 .8px #252525, 0 0 6px 2px rgba(150, 150, 150, .5);
  display: flex;
  flex-direction: column;
  min-width: 0;
  min-height: 0;
  overflow: hidden;
}

.k1 { grid-area: 1 / 1 / 2 / 2; }
.k2 { grid-area: 1 / 3 / 2 / 4; }
.k3 { grid-area: 1 / 5 / 2 / 7; }
.c-csat { grid-area: 1 / 8 / 4 / 11; }
.c-pie { grid-area: 1 / 12 / 4 / 15; width: 131px; }
.c-day { grid-area: 3 / 1 / 6 / 5; }
.c-week { grid-area: 7 / 1 / 8 / 5; }
.c-lang { grid-area: 5 / 6 / 6 / 9; }
.c-month { grid-area: 7 / 6 / 8 / 9; }
.c-box { grid-area: 5 / 10 / 8 / 13; }

.c-day, .c-week { width: 155px; }
.c-lang, .c-month { width: 125px; }

.kpi {
  align-items: center;
  justify-content: center;
  font-family: "Liberation Sans", Arial, sans-serif;
}

.kpi-value {
  font-size: 19px;
  line-height: 20px;
  color: #fff;
  margin-top: 2px;
}

.kpi-label {
  font-size: 7.5px;
  line-height: 10px;
  color: #bdbdbd;
}

.card-title {
  flex: 0 0 13px;
  padding-left: 5px;
  color: #e8e8e8;
  font: 700 6.7px/13px "Liberation Sans", Arial, sans-serif;
  white-space: nowrap;
}

.card-title.narrow {
  font-size: 6.5px;
}

.box-title {
  flex: 0 0 21px;
  text-align: center;
  padding: 2px 0 0;
  line-height: 8.2px;
  box-sizing: border-box;
}

.chart {
  display: block;
  flex: 1;
  width: 100%;
  min-height: 0;
}

.line {
  fill: none;
  stroke: #0b2f9f;
  stroke-width: 1.1;
}

.ax {
  font: 700 4.3px "Liberation Sans", sans-serif;
  fill: #b0b0b0;
}

.ax.dim {
  fill: #6a6a6a;
}

.ax.big {
  font-size: 5.5px;
}

.lg-b {
  font: 700 5px "Liberation Sans", sans-serif;
  fill: #e4e4e4;
}

.lg-b.small {
  font-size: 4.3px;
  fill: #ccc;
}

.notes {
  grid-area: 5 / 14 / 8 / 15;
  padding: 6.5px 0 0 1px;
  color: #eee;
  white-space: nowrap;
  font: 700 5.6px/6.7px "Liberation Sans", Arial, sans-serif;
}

.notes p {
  margin: 0 0 5.3px;
}

.note-head {
  color: #4b8fd4;
}

/* filters pane */
.filters {
  width: 19px;
  flex-shrink: 0;
  background: #333;
  display: flex;
  flex-direction: column;
  align-items: center;
  padding-top: 7px;
  box-sizing: border-box;
}

.filter-ico {
  margin-top: 7px;
}

.filters-label {
  writing-mode: vertical-rl;
  color: #eee;
  font-size: 7.3px;
  font-weight: 700;
  margin-top: 1px;
}

/* visualizations pane */
.viz, .data {
  background: #f3f2f1;
  box-sizing: border-box;
}

.viz {
  width: 96px;
  flex-shrink: 0;
  border-right: 1px solid #dcdcdc;
  display: flex;
  flex-direction: column;
}

.data {
  flex: 1;
}

.pane-head {
  height: 19px;
  padding: 3px 4px 0 5px;
  box-sizing: border-box;
  display: flex;
  align-items: center;
  justify-content: space-between;
  font-size: 7.8px;
  color: #333;
}

.pane-head strong {
  font-weight: 600;
}

.build {
  font-size: 5.8px;
  font-weight: 600;
  padding-left: 5px;
  line-height: 8px;
  margin-top: 2px;
}

.build-tabs {
  height: 27px;
  padding: 2px 0 0 5px;
  box-sizing: border-box;
  display: flex;
  gap: 19px;
  border-bottom: 1px solid #cfcfcf;
}

.build-sel {
  width: 17px;
  height: 17px;
  background: #d2d0ce;
  display: flex;
  align-items: center;
  justify-content: center;
}

.build-fmt {
  margin-top: 1px;
}

.viz-grid {
  display: grid;
  grid-template-columns: repeat(6, 14.7px);
  grid-auto-rows: 14.7px;
  padding: 3px 0 0 5px;
  place-items: center;
}

.dots {
  font-size: 8px;
  line-height: 8px;
  padding: 2px 0 0 7px;
  color: #555;
  letter-spacing: 1px;
}

.extra {
  height: 22px;
  margin-top: 4px;
  padding: 5px 0 0 6px;
  box-sizing: border-box;
  border-top: 1px dashed #e0e0e0;
  border-bottom: 1px solid #e0e0e0;
}

.wells {
  position: relative;
  flex: 1;
  padding-left: 4px;
  font-size: 5.8px;
  color: #444;
  overflow: hidden;
}

.well-label {
  padding: 4px 0 0 2px;
  line-height: 8px;
}

.well {
  width: 88px;
  height: 14px;
  box-sizing: border-box;
  margin-top: 3px;
  background: #fff;
  border: 1px dashed #e6e6e6;
  line-height: 12px;
  padding-left: 4px;
  font-size: 6px;
}

.well.last {
  margin-top: 4px;
  padding-left: 3px;
  font-size: 5.4px;
  white-space: nowrap;
}

.well-head {
  padding: 6px 0 0 2px;
  font-weight: 600;
  font-size: 6.3px;
  line-height: 9px;
}

.toggle-row {
  display: flex;
  justify-content: space-between;
  align-items: center;
  height: 14px;
  width: 80px;
  padding-left: 2px;
  font-size: 6px;
}

.toggle {
  width: 17px;
  height: 7.5px;
  border-radius: 4px;
  background: #117865;
  color: #ddd;
  font-size: 4.5px;
  line-height: 7.5px;
  padding-left: 2px;
  box-sizing: border-box;
  position: relative;
}

.toggle i {
  position: absolute;
  right: 1.5px;
  top: 1.5px;
  width: 4.5px;
  height: 4.5px;
  border-radius: 50%;
  background: #fff;
}

.scroll {
  position: absolute;
  right: 1px;
  top: 0;
  width: 2.5px;
  height: 80px;
  background: #c8c6c4;
}

/* data pane */
.data-search {
  margin: 7px 3px 6px;
  height: 11px;
  background: #fff;
  border: 1px solid #dcdcdc;
  box-sizing: border-box;
  display: flex;
  align-items: center;
  gap: 3px;
  padding-left: 5px;
  font-size: 6.3px;
  color: #777;
}

.data-row {
  height: 12.5px;
  display: flex;
  align-items: center;
  gap: 2px;
  padding-left: 7px;
  font-size: 5.8px;
  color: #444;
}

/* page tabs */
.pagebar {
  height: 16px;
  flex-shrink: 0;
  background: #f3f2f1;
  display: flex;
  align-items: stretch;
  padding-left: 22px;
}

.device {
  width: 23px;
  display: flex;
  align-items: center;
  justify-content: center;
}

.active-device {
  box-shadow: inset 0 -1.5px 0 #fff, inset 0 -3px 0 #117865;
  height: 16px;
  width: 14px;
  margin: 0 4px;
}

.pg-arrow {
  width: 11px;
  font-size: 8px;
  line-height: 15px;
  color: #bbb;
  text-align: center;
}

.page-tab {
  width: 86px;
  background: #fff;
  box-shadow: inset 0 -2px 0 #117865;
  font-size: 6.3px;
  line-height: 15px;
  text-align: center;
  color: #333;
}

.page-add {
  width: 20px;
  background: #117865;
  color: #fff;
  font: 700 11px/15px "Liberation Sans", sans-serif;
  text-align: center;
}

/* status bar */
.status {
  height: 15px;
  flex-shrink: 0;
  display: flex;
  align-items: center;
  justify-content: space-between;
  padding: 0 9px 0 2px;
  font-size: 5.8px;
  color: #555;
  border-bottom: 1.5px solid;
  border-image: linear-gradient(90deg, #555 308px, #ccc 308px) 1;
  box-sizing: border-box;
}

.zoom {
  display: flex;
  align-items: center;
  gap: 3px;
}

.slider {
  width: 53px;
  height: 1px;
  background: #777;
  position: relative;
}

.slider i {
  position: absolute;
  left: 17px;
  top: -2.5px;
  width: 1.5px;
  height: 6px;
  background: #333;
}

.zoom-pct {
  margin: 0 9px 0 6px;
}

/* windows taskbar */
.taskbar {
  height: 22px;
  flex-shrink: 0;
  background: #f1e2d8;
  display: flex;
  align-items: stretch;
}

.start {
  width: 26px;
  display: flex;
  align-items: center;
  justify-content: center;
}

.task-search {
  width: 180px;
  background: #fff;
  display: flex;
  align-items: center;
  gap: 5px;
  padding-left: 6px;
  box-sizing: border-box;
  font-size: 7.3px;
  color: #333;
}

.mascot {
  margin-left: auto;
  margin-right: 11px;
}

.task-app {
  width: 26px;
  display: flex;
  align-items: center;
  justify-content: center;
}

.task-app.running {
  box-shadow: inset 0 -1px 0 #b8651e;
}

.task-app.focused {
  background: #f8efe9;
}

.tray {
  margin-left: auto;
  display: flex;
  align-items: center;
  padding-right: 7px;
  font-size: 6.3px;
  color: #333;
}

.t-temp {
  width: 22px;
  margin-left: 3px;
  margin-right: 5px;
  text-align: center;
}

.t-item {
  margin: 0 2.5px;
}

.t-lang {
  width: 12px;
  margin-left: 3px;
  text-align: center;
}

.clock {
  width: 36px;
  margin-left: 2px;
  display: flex;
  flex-direction: column;
  align-items: center;
  line-height: 9.5px;
  font-size: 6px;
}

.notify {
  width: 20px;
  position: relative;
  display: flex;
  justify-content: center;
  padding-top: 2px;
}

.notify span {
  position: absolute;
  right: 2px;
  top: 4px;
  width: 7px;
  height: 7px;
  border-radius: 50%;
  background: #ddd;
  border: .5px solid #555;
  line-height: 7px;
  text-align: center;
  font-size: 5px;
}
</style>
